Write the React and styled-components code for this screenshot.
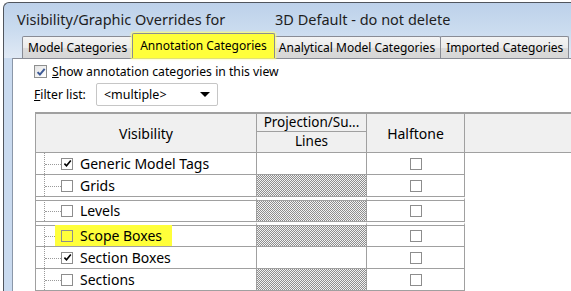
import styled, { createGlobalStyle } from "styled-components";

const GlobalStyle = createGlobalStyle`
  html, body {
    margin: 0;
    padding: 0;
    background: #fff;
  }
  body {
    font-family: "Noto Sans", "Open Sans", sans-serif;
    color: #000;
  }
`;

const Window = styled.div`
  width: 571px;
  height: 291px;
  box-sizing: border-box;
  padding: 2px 0 0 3px;
  overflow: hidden;
  background: #fff;
`;

const Frame = styled.div`
  height: 100%;
  display: flex;
  flex-direction: column;
  border-top: 1px solid #50555d;
  border-left: 1px solid #50555d;
  border-top-left-radius: 6px;
  background: linear-gradient(#bdd1ea 0, #cbdcef 28px, #e0e9f5 55px);
`;

const TitleBar = styled.div`
  height: 30px;
  box-sizing: border-box;
  display: flex;
  align-items: flex-end;
  padding: 0 0 4px 13px;
  font-size: 14.5px;
  color: #1e1e1e;
`;

const TitleLabel = styled.span`
  width: 258px;
  white-space: nowrap;
`;

const TabRow = styled.div`
  height: 25px;
  display: flex;
  align-items: flex-end;
  padding-left: 18px;
`;

const Tab = styled.div`
  position: relative;
  height: ${(p) => (p.active ? 25 : 22)}px;
  box-sizing: border-box;
  display: flex;
  align-items: center;
  padding: 0 ${(p) => (p.active ? 7 : 5)}px 1px;
  margin: 0 ${(p) => (p.active ? -2 : -1)}px 0 0;
  border: 1px solid #898c95;
  border-bottom: none;
  border-radius: 2px 2px 0 0;
  font-size: 12px;
  white-space: nowrap;
  z-index: ${(p) => (p.active ? 1 : 0)};
  background: ${(p) =>
    p.active
      ? "#ffff3a"
      : "linear-gradient(#f4f4f4, #ebebeb 50%, #dcdcdc 51%, #d6d6d6)"};
  box-shadow: ${(p) => (p.active ? "0 0 2px 1px #ffff70" : "none")};
`;

const Body = styled.div`
  flex: 1;
  min-height: 0;
  display: flex;
`;

const SideStrip = styled.div`
  width: 8px;
  background: #c9daef;
  border-right: 1px solid #8b97a8;
`;

const Panel = styled.div`
  flex: 1;
  min-width: 0;
  display: flex;
  flex-direction: column;
  background: #fff;
  border-top: 1px solid #898c95;
  padding: 5px 0 0 21px;
`;

const OptionRow = styled.label`
  display: flex;
  align-items: center;
  gap: 5px;
  height: 15px;
  font-size: 12.2px;
`;

const FilterRow = styled.div`
  display: flex;
  align-items: center;
  gap: 10px;
  height: 22px;
  margin-top: 4px;
  font-size: 12.2px;
`;

const Dropdown = styled.div`
  width: 122px;
  height: 23px;
  box-sizing: border-box;
  display: flex;
  align-items: center;
  justify-content: space-between;
  padding: 0 7px 0 7px;
  border: 1px solid #c6c6c6;
  border-radius: 2px;
  background: #fff;
  font-size: 12.5px;
`;

const Arrow = styled.span`
  width: 0;
  height: 0;
  border-left: 5px solid transparent;
  border-right: 5px solid transparent;
  border-top: 5px solid #000;
`;

const AeroBox = styled.span`
  width: 13px;
  height: 13px;
  box-sizing: border-box;
  display: inline-flex;
  align-items: center;
  justify-content: center;
  border: 1px solid #8e8f8f;
  background: linear-gradient(135deg, #e3e3e3, #fff);
`;

const Table = styled.div`
  flex: 1;
  margin: 7px 0 0 1px;
  border-top: 2px solid #a0a0a0;
  border-left: 1px solid #a0a0a0;
  overflow: hidden;
`;

const Header = styled.div`
  display: grid;
  grid-template-columns: 221px 110px 98px 1fr;
  height: 38px;
  background: #f0f0f0;
  border-bottom: 1px solid #a0a0a0;
  font-size: 14px;
`;

const HeadCell = styled.div`
  display: flex;
  flex-direction: column;
  align-items: center;
  justify-content: center;
  border-right: ${(p) => (p.last ? "none" : "1px solid #a0a0a0")};
`;

const HeadPart = styled.div`
  align-self: stretch;
  flex: ${(p) => (p.top ? "0 0 17px" : "1")};
  display: flex;
  align-items: center;
  justify-content: center;
  border-bottom: ${(p) => (p.top ? "1px solid #a0a0a0" : "none")};
  font-size: 13.5px;
  line-height: 1;
`;

const Row = styled.div`
  display: grid;
  grid-template-columns: 221px 110px 98px;
  height: ${(p) => (p.split ? 25 : 22)}px;
`;

const Cell = styled.div`
  box-sizing: border-box;
  display: flex;
  align-items: center;
  border-right: 1px solid #a0a0a0;
  border-bottom: 1px solid #a0a0a0;
  border-top: ${(p) => (p.split ? "3px solid #fff" : "none")};
  box-shadow: ${(p) => (p.split ? "inset 0 1px 0 #a0a0a0" : "none")};
  justify-content: ${(p) => (p.center ? "center" : "flex-start")};
  padding-left: ${(p) => (p.center ? 0 : 8)}px;
  background: ${(p) =>
    p.hatched
      ? "repeating-conic-gradient(#8e8e8e 0 25%, #f2f2f2 0 50%) 0 0 / 2px 2px"
      : "#fff"};
  background-clip: padding-box;
`;

const Tree = styled.span`
  position: relative;
  align-self: stretch;
  width: 16px;
  flex: none;
  border-left: 1px dotted #9a9a9a;

  &::after {
    content: "";
    position: absolute;
    left: 0;
    right: 0;
    top: 50%;
    border-top: 1px dotted #9a9a9a;
  }
`;

const Item = styled.span`
  position: relative;
  z-index: 1;
  display: flex;
  align-items: center;
  align-self: stretch;
  gap: 7px;
  margin-left: ${(p) => (p.marked ? -6 : 0)}px;
  padding: 0 ${(p) => (p.marked ? 10 : 0)}px 0 ${(p) => (p.marked ? 6 : 0)}px;
  background: ${(p) => (p.marked ? "#ffff3a" : "transparent")};
  font-size: 14px;
  white-space: nowrap;
`;

const Box = styled.span`
  width: 12px;
  height: 12px;
  box-sizing: border-box;
  flex: none;
  display: inline-flex;
  align-items: center;
  justify-content: center;
  border: 1px solid #8d8d8d;
  background: ${(p) => (p.marked ? "transparent" : "#fff")};
`;

const Check = ({ color = "#000", size = 9, width = 1.6 }) => (
  <svg width={size} height={size} viewBox="0 0 9 9">
    <path
      d="M1.4 4.6 L3.5 6.8 L7.8 1.6"
      fill="none"
      stroke={color}
      strokeWidth={width}
    />
  </svg>
);

const rows = [
  { name: "Generic Model Tags", checked: true },
  { name: "Grids", hatched: true },
  { name: "Levels", hatched: true, split: true },
  { name: "Scope Boxes", hatched: true, split: true, marked: true },
  { name: "Section Boxes", checked: true },
  { name: "Sections", hatched: true },
];

const tabs = [
  "Model Categories",
  "Annotation Categories",
  "Analytical Model Categories",
  "Imported Categories",
];

export default function App() {
  return (
    <>
      <GlobalStyle />
      <Window>
        <Frame>
          <TitleBar>
            <TitleLabel>Visibility/Graphic Overrides for</TitleLabel>
            <span>3D Default - do not delete</span>
          </TitleBar>
          <TabRow>
            {tabs.map((t, i) => (
              <Tab key={t} active={i === 1}>
                {t}
              </Tab>
            ))}
          </TabRow>
          <Body>
            <SideStrip />
            <Panel>
              <OptionRow>
                <AeroBox>
                  <Check color="#3d5a96" size={10} width={1.8} />
                </AeroBox>
                <span>
                  <u>S</u>how annotation categories in this view
                </span>
              </OptionRow>
              <FilterRow>
                <span>
                  <u>F</u>ilter list:
                </span>
                <Dropdown>
                  <span>&lt;multiple&gt;</span>
                  <Arrow />
                </Dropdown>
              </FilterRow>
              <Table>
                <Header>
                  <HeadCell>Visibility</HeadCell>
                  <HeadCell>
                    <HeadPart top>Projection/Su...</HeadPart>
                    <HeadPart>Lines</HeadPart>
                  </HeadCell>
                  <HeadCell>Halftone</HeadCell>
                  <HeadCell last />
                </Header>
                {rows.map((r) => (
                  <Row key={r.name} split={r.split}>
                    <Cell split={r.split}>
                      <Tree />
                      <Item marked={r.marked}>
                        <Box marked={r.marked}>{r.checked && <Check />}</Box>
                        {r.name}
                      </Item>
                    </Cell>
                    <Cell split={r.split} hatched={r.hatched} />
                    <Cell split={r.split} center>
                      <Box />
                    </Cell>
                  </Row>
                ))}
              </Table>
            </Panel>
          </Body>
        </Frame>
      </Window>
    </>
  );
}
